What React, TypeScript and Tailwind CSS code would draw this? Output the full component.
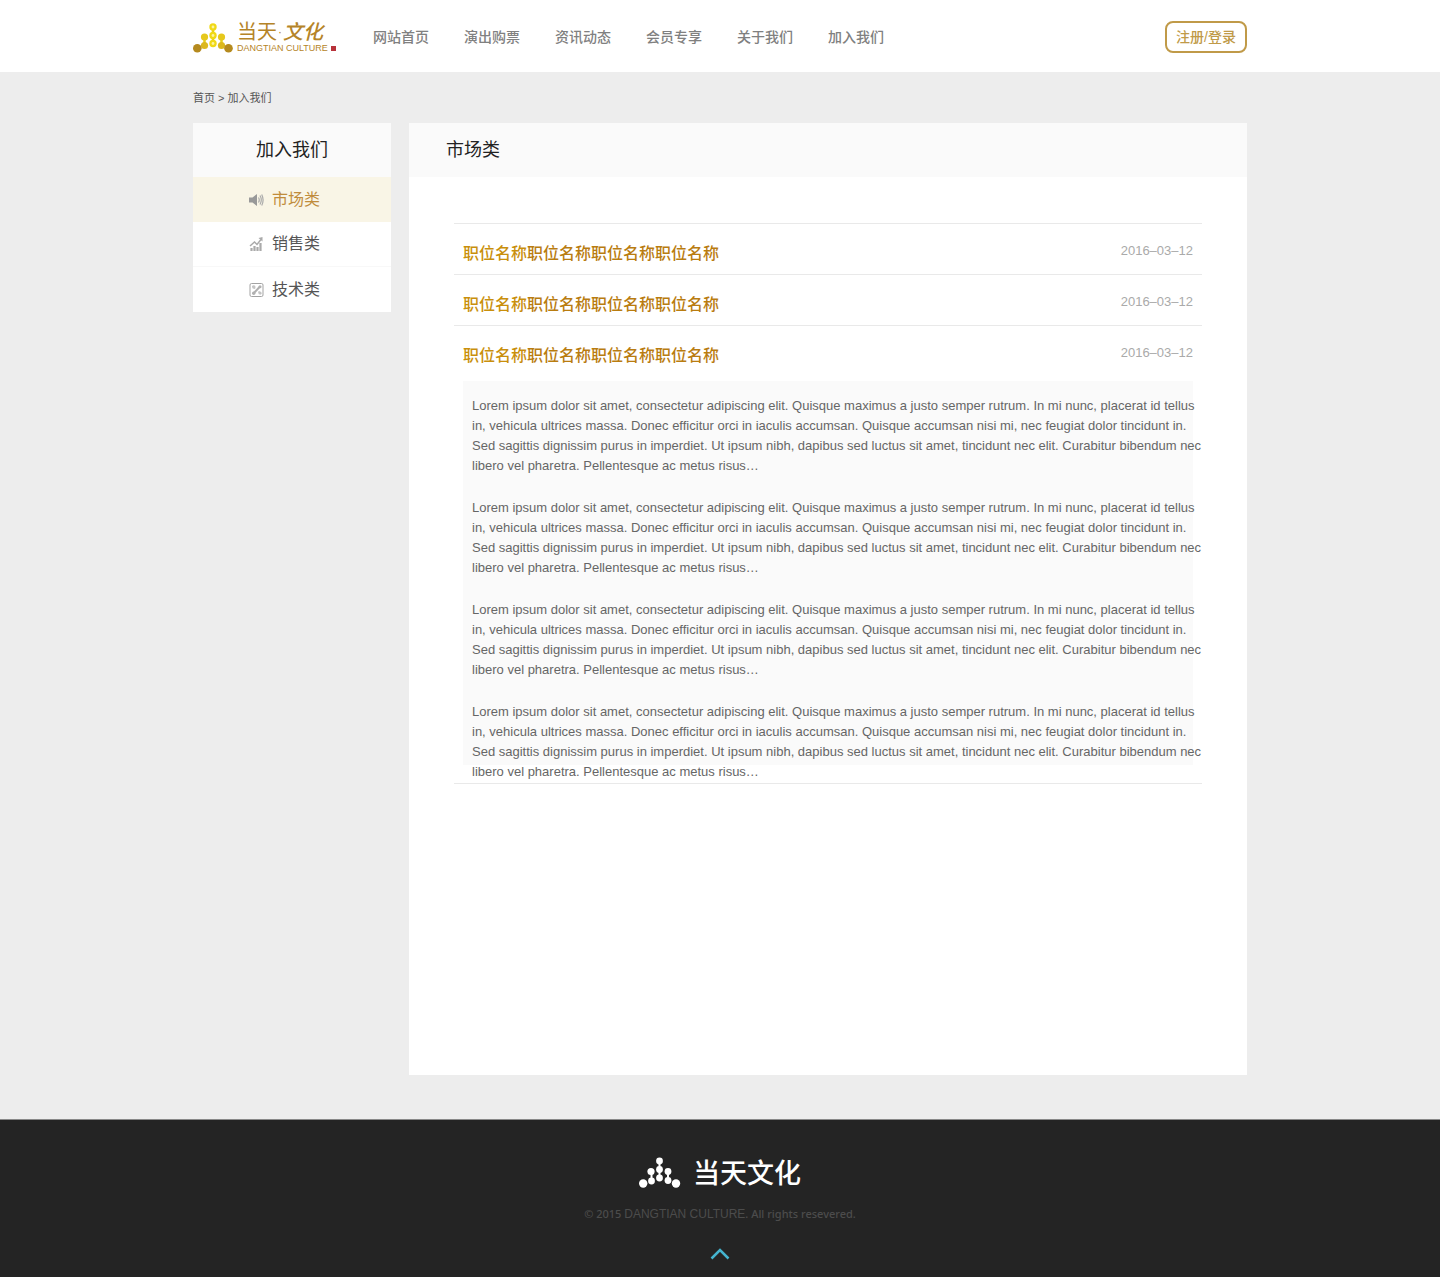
import React from 'react';

const navItems = ['网站首页', '演出购票', '资讯动态', '会员专享', '关于我们', '加入我们'];

const paragraph = [
  'Lorem ipsum dolor sit amet, consectetur adipiscing elit. Quisque maximus a justo semper rutrum. In mi nunc, placerat id tellus',
  'in, vehicula ultrices massa. Donec efficitur orci in iaculis accumsan. Quisque accumsan nisi mi, nec feugiat dolor tincidunt in.',
  'Sed sagittis dignissim purus in imperdiet. Ut ipsum nibh, dapibus sed luctus sit amet, tincidunt nec elit. Curabitur bibendum nec',
  'libero vel pharetra. Pellentesque ac metus risus…',
];

const jobs = [
  { id: 1, date: '2016–03–12', body: [] as string[][] },
  { id: 2, date: '2016–03–12', body: [] as string[][] },
  { id: 3, date: '2016–03–12', body: [paragraph, paragraph, paragraph, paragraph] },
];

function HeaderMark() {
  return (
    <svg width="40" height="30" viewBox="0 0 40 30" aria-hidden="true">
      <path d="M20 5v16M11.500 14v10M28.500 14v10" stroke="#e6cf1c" strokeWidth="2.500" />
      <g fill="#f0d916">
        <circle cx="20" cy="4" r="3.700" />
        <circle cx="20" cy="12.500" r="3.700" />
        <circle cx="20" cy="20.500" r="3.700" />
        <circle cx="11.500" cy="14" r="3.600" fill="#e6c81c" />
        <circle cx="28.500" cy="14" r="3.600" fill="#e6c81c" />
        <circle cx="11.500" cy="22.500" r="3.600" fill="#dcb81e" />
        <circle cx="28.500" cy="22.500" r="3.600" fill="#dcb81e" />
      </g>
      <g fill="#fbf3a0">
        <circle cx="20" cy="4" r="1.400" />
        <circle cx="20" cy="12.500" r="1.400" />
        <circle cx="20" cy="20.500" r="1.400" />
      </g>
      <circle cx="4.300" cy="25.300" r="4.300" fill="#b58a1e" />
      <circle cx="35.500" cy="25.300" r="4.300" fill="#b58a1e" />
    </svg>
  );
}

function FooterMark() {
  return (
    <svg width="42" height="32" viewBox="0 0 42 32" fill="#fff" aria-hidden="true">
      <path d="M20.500 4v18M12.500 14v11M29 14v11" stroke="#fff" strokeWidth="2" />
      <circle cx="20.500" cy="4" r="3.400" />
      <circle cx="20.500" cy="12.500" r="3.400" />
      <circle cx="20.500" cy="21" r="3.400" />
      <circle cx="12" cy="14.500" r="3.600" />
      <circle cx="12.500" cy="24" r="3.400" />
      <circle cx="29" cy="14.500" r="3.400" />
      <circle cx="29" cy="23.500" r="3.400" />
      <circle cx="4.200" cy="26.500" r="4.200" />
      <circle cx="37" cy="26.500" r="4.200" />
    </svg>
  );
}

function SpeakerIcon() {
  return (
    <svg width="15" height="14" viewBox="0 0 15 14" fill="none" aria-hidden="true">
      <path d="M0 4.500h3.500L8 1v12L3.500 9.500H0z" fill="#999" />
      <path d="M9.500 4.500q1.500 2.500 0 5M11 2.500q2.600 4.500 0 9M12.700 1.500q2.800 5.500 0 11" stroke="#aaa" strokeWidth="1.200" />
    </svg>
  );
}

function ChartIcon() {
  return (
    <svg width="15" height="14" viewBox="0 0 15 14" fill="none" aria-hidden="true">
      <path d="M2.500 14v-3M5.500 14V9M8.500 14v-4M11.500 14V6" stroke="#aaa" strokeWidth="2.200" />
      <path d="M1 9l4.500-4 2.500 2.500 4-5" stroke="#aaa" strokeWidth="1.500" />
      <path d="M9.500 1L13.500 0v4.500z" fill="#aaa" />
    </svg>
  );
}

function ToolIcon() {
  return (
    <svg width="15" height="14" viewBox="0 0 15 14" fill="none" aria-hidden="true">
      <rect x="1" y=".5" width="13" height="13" rx="1.500" stroke="#a3a3a3" />
      <path d="M4.500 10.500l6.500-7" stroke="#b0b0b0" strokeWidth="2" />
      <path d="M3.500 3l2.500 2.500M9.500 8.500l2.500 2.500" stroke="#c0c0c0" strokeWidth="1.600" />
      <circle cx="4.800" cy="4" r="1.700" fill="#c4c4c4" />
      <circle cx="4.700" cy="10.200" r="1.700" fill="#b0b0b0" />
      <circle cx="11" cy="3.800" r="1.500" fill="#b0b0b0" />
      <circle cx="11" cy="10" r="1.600" fill="#c4c4c4" />
    </svg>
  );
}

const categories = [
  { label: '市场类', icon: <SpeakerIcon />, style: 'bg-[#f9f5e6] text-[#c08c3c]' },
  { label: '销售类', icon: <ChartIcon />, style: 'bg-white text-[#555] border-b border-[#f8f8f8]' },
  { label: '技术类', icon: <ToolIcon />, style: 'bg-white text-[#555]' },
];

export default function App() {
  return (
    <div className="flex min-h-screen flex-col bg-[#ededed] font-['Liberation_Sans','Noto_Sans_CJK_SC',sans-serif] text-[#555]">
      <header className="bg-white">
        <div className="mx-auto flex h-18 max-w-[1054px] items-center pt-0.5">
          <a href="#" className="flex w-[144px] shrink-0 items-center gap-1 pt-0.5">
            <HeaderMark />
            <span className="flex flex-col text-[#b58428]">
              <span className="flex items-center gap-px text-[20px] leading-5">
                <span>当天</span>
                <span className="text-[12px]">·</span>
                <span className="font-medium italic">文化</span>
              </span>
              <span className="flex items-center gap-[3px] text-[9px] leading-3">
                <span className="whitespace-nowrap">DANGTIAN CULTURE</span>
                <span className="size-[5px] shrink-0 bg-[#b8323a]" />
              </span>
            </span>
          </a>
          <nav className="ml-9 flex gap-[35px] text-[14px] leading-5 font-medium whitespace-nowrap text-[#808080]">
            {navItems.map((item) => (
              <a key={item} href="#">{item}</a>
            ))}
          </nav>
          <button type="button" className="ml-auto h-8 w-[82px] rounded-lg border-2 border-[#c09a48] text-[14px] leading-5 font-medium text-[#c09a48]">
            注册/登录
          </button>
        </div>
      </header>

      <div className="mx-auto w-full max-w-[1054px] flex-1 pb-11">
        <nav aria-label="breadcrumb" className="flex h-[51px] items-center gap-[3px] text-[11px] leading-4">
          <a href="#">首页</a>
          <span>&gt;</span>
          <a href="#">加入我们</a>
        </nav>

        <div className="flex items-start gap-[18px]">
          <aside className="w-[198px] shrink-0">
            <h2 className="flex h-[54px] items-center justify-center bg-[#fafafa] text-[18px] text-[#222]">加入我们</h2>
            <ul>
              {categories.map(({ label, icon, style }) => (
                <li key={label}>
                  <a href="#" className={`flex h-[45px] items-center gap-2 pl-14 text-[16px] ${style}`}>
                    {icon}
                    {label}
                  </a>
                </li>
              ))}
            </ul>
          </aside>

          <main className="min-h-[952px] min-w-0 flex-1 bg-white">
            <h1 className="flex h-[54px] items-center bg-[#fafafa] pl-[37px] text-[18px] text-[#222]">市场类</h1>
            <ul className="mx-[45px] mt-[46px] border-b border-[#e9e9e9]">
              {jobs.map((job) => (
                <li key={job.id} className="border-t border-[#e9e9e9] px-[9px]">
                  <div className="flex h-[50px] items-start justify-between pt-[18px]">
                    <h3 className="text-[16px] leading-6 font-medium text-[#b97c10]">
                      <a href="#"><span className="text-[#c98f0c]">职位名称</span>职位名称职位名称职位名称</a>
                    </h3>
                    <time className="text-[13px] leading-[18px] text-[#aaa]">{job.date}</time>
                  </div>
                  {job.body.length > 0 && (
                    <div className="mt-[5px] mb-[18px] flex h-[384px] flex-col gap-[22px] bg-[#fafafa] pt-[15px] pl-[9px] text-[13px] leading-5 whitespace-nowrap text-[#666]">
                      {job.body.map((lines, i) => (
                        <p key={i}>
                          {lines.map((line) => (
                            <span key={line} className="block">{line} </span>
                          ))}
                        </p>
                      ))}
                    </div>
                  )}
                </li>
              ))}
            </ul>
          </main>
        </div>
      </div>

      <footer className="flex h-[158px] flex-col items-center border-t border-[#888] bg-[#242424] pt-9">
        <div className="flex items-center gap-3 text-white">
          <FooterMark />
          <span className="pt-0.5 text-[27px] leading-8 font-medium">当天文化</span>
        </div>
        <p className="mt-[14px] font-['Noto_Sans',sans-serif] text-[11px] leading-5 font-medium text-[#4c4c4c]">
          © 2015 <span className="font-['Liberation_Sans',sans-serif] text-[12px] font-normal">DANGTIAN CULTURE</span>. All rights resevered.
        </p>
        <a href="#" aria-label="Back to top" className="mt-6">
          <svg width="20" height="12" viewBox="0 0 20 12" fill="none" stroke="#45b4cf" strokeWidth="2.500" aria-hidden="true">
            <path d="M1.500 10.500L10 2l8.500 8.500" />
          </svg>
        </a>
      </footer>
    </div>
  );
}
